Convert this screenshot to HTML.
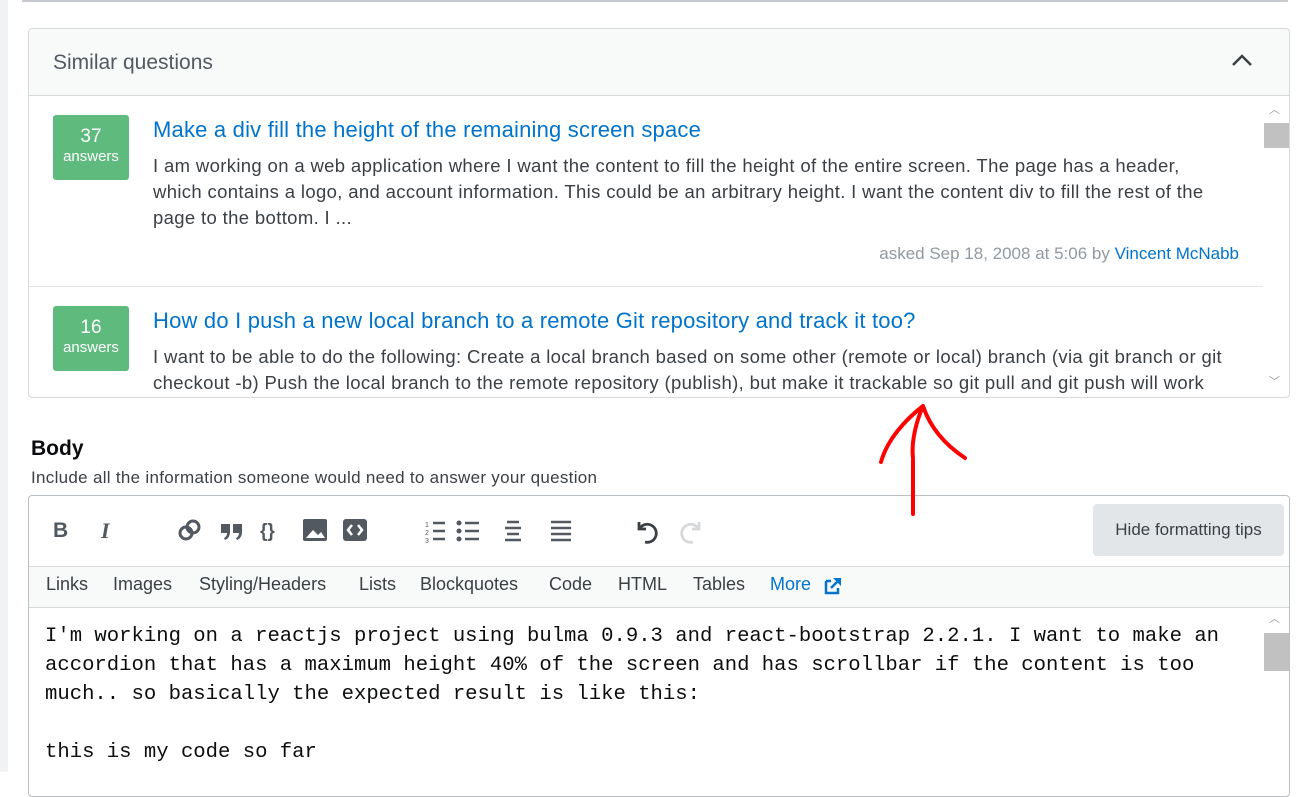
<!DOCTYPE html>
<html><head><style>
body{margin:0;width:1312px;height:772px;overflow:hidden;background:#fff;font-family:"Liberation Sans",sans-serif;position:relative}
.a{position:absolute}
.card{left:28px;top:28px;width:1260px;height:368px;border:1px solid #d6d9dc;border-radius:4px;overflow:hidden}
.hdr{left:0;top:0;width:1260px;height:66px;background:#f8f9f9;border-bottom:1px solid #d6d9dc}
.badge{width:76px;height:65px;background:#5eba7d;border-radius:3px;color:#fff;text-align:center}
.t{color:#0074cc;font-size:22px;white-space:nowrap;letter-spacing:0.2px}
.ex{color:#3b4045;font-size:18.5px;line-height:26px;width:1085px;letter-spacing:0.35px}
.tb{color:#3b4045;font-size:18px;top:78px}
.mono{font-family:"Liberation Mono",monospace;font-size:20.6px;color:#0c0d0e;line-height:29px;white-space:pre}
</style></head><body>
<div class="a" style="left:0;top:0;width:8px;height:772px;background:#f1f2f3"></div>
<div class="a" style="left:22px;top:0;width:1266px;height:2px;background:#c8ccd0"></div>
<div class="a card">
 <div class="a hdr"><div class="a" style="left:24px;top:22px;font-size:21px;color:#525960">Similar questions</div>
 <svg class="a" style="left:1202px;top:24px" width="22" height="14"><path d="M2 12L11 3L20 12" stroke="#3b4045" stroke-width="2.5" fill="none"/></svg></div>
 <div class="a" style="left:1235px;top:94px;width:25px;height:25px;background:#c1c1c1"></div>
 <div class="a" style="left:1240px;top:72px;font-size:11px;color:#999">︿</div>
 <div class="a" style="left:1240px;top:344px;font-size:11px;color:#999">﹀</div>
 <div class="a badge" style="left:24px;top:86px"><div style="font-size:19px;margin-top:11px">37</div><div style="font-size:15px">answers</div></div>
 <div class="a t" style="left:124px;top:88px">Make a div fill the height of the remaining screen space</div>
 <div class="a ex" style="left:124px;top:124px;white-space:nowrap">I am working on a web application where I want the content to fill the height of the entire screen. The page has a header,<br>which contains a logo, and account information. This could be an arbitrary height. I want the content div to fill the rest of the<br>page to the bottom. I ...</div>
 <div class="a" style="right:50px;top:215px;font-size:17px;color:#9199a1">asked Sep 18, 2008 at 5:06 by <span style="color:#0074cc">Vincent McNabb</span></div>
 <div class="a" style="left:0;top:257px;width:1234px;height:1px;background:#e3e6e8"></div>
 <div class="a badge" style="left:24px;top:277px"><div style="font-size:19px;margin-top:11px">16</div><div style="font-size:15px">answers</div></div>
 <div class="a t" style="left:124px;top:279px">How do I push a new local branch to a remote Git repository and track it too?</div>
 <div class="a ex" style="left:124px;top:315px">I want to be able to do the following: Create a local branch based on some other (remote or local) branch (via git branch or git checkout -b) Push the local branch to the remote repository (publish), but make it trackable so git pull and git push will work</div>
</div>
<div class="a" style="left:31px;top:437px;font-size:21px;font-weight:bold;color:#0c0d0e">Body</div>
<div class="a" style="left:31px;top:468px;font-size:17px;color:#3b4045;white-space:nowrap;letter-spacing:0.3px">Include all the information someone would need to answer your question</div>
<div class="a" style="left:28px;top:495px;width:1260px;height:300px;border:1px solid #babfc4;border-radius:4px;overflow:hidden">
 <div class="a" style="left:0;top:70px;width:1260px;height:40px;background:#f8f9f9;border-top:1px solid #d6d9dc;border-bottom:1px solid #d6d9dc"></div>
 <div class="a" style="left:24px;top:23px;font-size:21px;font-weight:bold;color:#525960">B</div>
 <div class="a" style="left:72px;top:22px;font-size:22px;font-style:italic;font-family:'Liberation Serif',serif;font-weight:bold;color:#525960">I</div>
 <svg class="a" style="left:148px;top:22px" width="190" height="26" fill="#525960" stroke="#525960">
  <circle cx="9" cy="15" r="6" fill="none" stroke-width="3"/><circle cx="16" cy="9" r="6" fill="none" stroke-width="3"/>
  <path d="M44 6h9v8c0 4-2 7-5 8l-1-2c2-1 3-3 3-5h-6zM56 6h9v8c0 4-2 7-5 8l-1-2c2-1 3-3 3-5h-6z" stroke="none"/>
  <text x="83" y="19" font-size="19" font-weight="bold" stroke="none">{}</text>
  <rect x="126" y="1" width="24" height="22" rx="2" stroke="none"/><path d="M129 20L136 12L141 17L144 14L148 20Z" fill="#fff" stroke="none"/>
  <rect x="166" y="1" width="24" height="22" rx="3" stroke="none"/><path d="M175 7L171 12L175 17M181 7L185 12L181 17" stroke="#fff" stroke-width="2.5" fill="none"/>
 </svg>
 <svg class="a" style="left:396px;top:24px" width="160" height="24" stroke="#525960" stroke-width="2.5">
  <path d="M8 3H20M8 11H20M8 19H20M40 3H54M40 11H54M40 19H54M82 2H94M80 8H96M82 14H94M80 20H96M126 2H146M126 8H146M126 14H146M126 20H146"/>
  <circle cx="34" cy="3" r="1.3"/><circle cx="34" cy="11" r="1.3"/><circle cx="34" cy="19" r="1.3"/>
  <text x="0" y="7" font-size="7" stroke="none" fill="#525960">1</text><text x="0" y="15" font-size="7" stroke="none" fill="#525960">2</text><text x="0" y="23" font-size="7" stroke="none" fill="#525960">3</text>
 </svg>
 <svg class="a" style="left:604px;top:22px" width="70" height="28" fill="none" stroke-width="2.8">
  <path d="M6 4V11H13M7 10A9 9 0 1 1 12 24" stroke="#3b4045"/>
  <path d="M66 4V11H59M65 10A9 9 0 1 0 60 24" stroke="#d6d9dc"/>
 </svg>
 <div class="a" style="left:1064px;top:8px;width:191px;height:52px;background:#e3e6e8;border-radius:4px;font-size:17px;color:#3b4045;line-height:52px;text-align:center">Hide formatting tips</div>
 <div class="a tb" style="left:17px">Links</div>
 <div class="a tb" style="left:84px">Images</div>
 <div class="a tb" style="left:170px">Styling/Headers</div>
 <div class="a tb" style="left:330px">Lists</div>
 <div class="a tb" style="left:391px">Blockquotes</div>
 <div class="a tb" style="left:520px">Code</div>
 <div class="a tb" style="left:589px">HTML</div>
 <div class="a tb" style="left:664px">Tables</div>
 <div class="a tb" style="left:741px;color:#0074cc">More</div>
 <svg class="a" style="left:794px;top:80px" width="20" height="20"><path d="M3 5h5M3 5v12h12v-5" stroke="#0074cc" stroke-width="2.5" fill="none"/><path d="M10 2h8v8z" fill="#0074cc"/><path d="M8 12L16 4" stroke="#0074cc" stroke-width="2.5"/></svg>
 <div class="a mono" style="left:16px;top:126px">I'm working on a reactjs project using bulma 0.9.3 and react-bootstrap 2.2.1. I want to make an
accordion that has a maximum height 40% of the screen and has scrollbar if the content is too
much.. so basically the expected result is like this:

this is my code so far</div>
 <div class="a" style="left:1235px;top:137px;width:25px;height:38px;background:#c1c1c1"></div>
 <div class="a" style="left:1240px;top:114px;font-size:11px;color:#999">︿</div>
</div>
<svg class="a" style="left:875px;top:400px" width="100" height="120" fill="none" stroke="#f00" stroke-width="4" stroke-linecap="round">
 <path d="M38 114V60M38 58C36 40 42 20 48 6M48 6C30 20 12 40 6 62M48 6C56 30 72 46 90 58"/>
</svg>
</body></html>
